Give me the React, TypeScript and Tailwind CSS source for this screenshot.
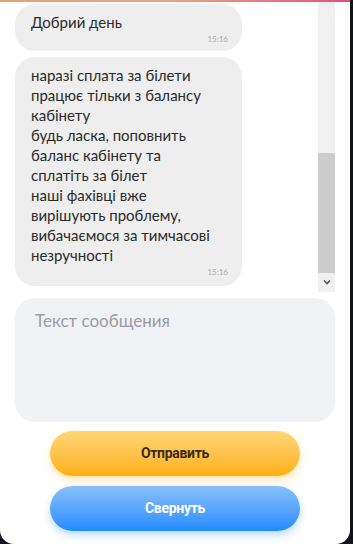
import React from 'react';

const lines = [
  'наразі сплата за білети',
  'працює тільки з балансу',
  'кабінету',
  'будь ласка, поповнить',
  'баланс кабінету та',
  'сплатіть за білет',
  'наші фахівці вже',
  'вирішують проблему,',
  'вибачаємося за тимчасові',
  'незручності',
];

export default function App() {
  return (
    <div className="w-[353px] h-[544px] bg-[#11131a] flex" style={{ fontFamily: 'Lato, "Noto Sans", sans-serif' }}>
      <div className="w-[350px] h-full bg-white rounded-b-[14px] overflow-hidden flex flex-col">
        <div className="h-[2px] bg-gradient-to-r from-[#e4a27e] via-[#e8a283] to-[#e0507a]" />

        {/* Messages */}
        <div className="h-[290px] flex">
          <div className="flex-1 flex flex-col gap-[6px] pl-[15px] pt-[2px]">
            <div className="w-[227px] bg-[#eeeeee] rounded-[20px] pl-[16px] pr-[14px] pt-[8px] pb-[6px]">
              <p className="text-[15px] leading-[20px] text-[#2a2a2a]">Добрий день</p>
              <p className="text-right text-[8px] leading-[12px] text-[#a9a9a9] mt-[1px]">15:16</p>
            </div>
            <div className="w-[227px] bg-[#eeeeee] rounded-[20px] pl-[16px] pr-[14px] pt-[8px] pb-[8px]">
              {lines.map((l, i) => (
                <p key={i} className="text-[15px] leading-[20px] text-[#2a2a2a] whitespace-nowrap">{l}</p>
              ))}
              <p className="text-right text-[8px] leading-[12px] text-[#a9a9a9] mt-[1px]">15:16</p>
            </div>
          </div>
          {/* scrollbar */}
          <div className="w-[17px] mr-[15px] bg-[#f0f0f0] flex flex-col pt-[151px]">
            <div className="h-[120px] bg-[#cdcdcd]" />
            <div className="h-[17px] flex items-center justify-center">
              <svg width="8" height="6" viewBox="0 0 8 6">
                <path d="M1 1.5 L4 4.5 L7 1.5" stroke="#555" strokeWidth="1.6" fill="none" />
              </svg>
            </div>
          </div>
        </div>

        {/* Input */}
        <div className="px-[15px] pt-[6px]">
          <div className="h-[124px] bg-[#f1f2f6] rounded-[20px] px-[20px] pt-[11px]">
            <span className="text-[17px] leading-[22px] text-[#9b9ba3]">Текст сообщения</span>
          </div>
        </div>

        {/* Buttons */}
        <div className="flex flex-col items-center gap-[10px] pt-[9px]" style={{ fontFamily: 'Roboto, sans-serif' }}>
          <button className="w-[250px] h-[45px] rounded-full bg-gradient-to-b from-[#ffd673] to-[#ffb000] shadow-[0_4px_8px_rgba(255,176,0,0.3)] text-[14px] font-bold tracking-[-0.3px] text-[#3a2a08]">
            Отправить
          </button>
          <button className="w-[250px] h-[45px] rounded-full bg-gradient-to-b from-[#88bffa] to-[#1f8bff] shadow-[0_4px_8px_rgba(31,139,255,0.3)] text-[14px] font-bold tracking-[-0.3px] text-white">
            Свернуть
          </button>
        </div>
      </div>
    </div>
  );
}
